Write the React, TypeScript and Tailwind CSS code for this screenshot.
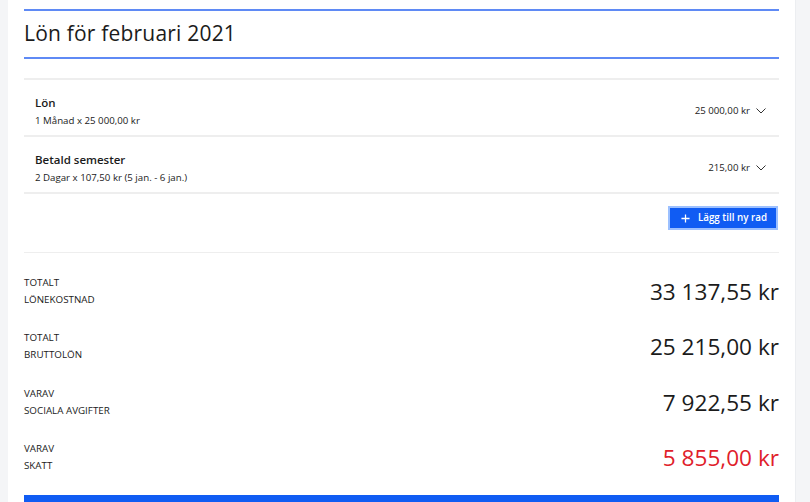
import React from "react";

const rows = [
  { title: "Lön", sub: "1 Månad x 25 000,00 kr", value: "25 000,00 kr" },
  { title: "Betald semester", sub: "2 Dagar x 107,50 kr (5 jan. - 6 jan.)", value: "215,00 kr" },
];

const totals = [
  { a: "TOTALT", b: "LÖNEKOSTNAD", v: "33 137,55 kr", red: false },
  { a: "TOTALT", b: "BRUTTOLÖN", v: "25 215,00 kr", red: false },
  { a: "VARAV", b: "SOCIALA AVGIFTER", v: "7 922,55 kr", red: false },
  { a: "VARAV", b: "SKATT", v: "5 855,00 kr", red: true },
];

function Chevron() {
  return (
    <svg width="10" height="6" viewBox="0 0 10 6" fill="none" className="ml-[6px]">
      <path d="M0.5 0.5L5 5L9.5 0.5" stroke="#333" strokeWidth="1" />
    </svg>
  );
}

export default function App() {
  return (
    <div
      className="flex w-[810px] h-[502px] overflow-hidden bg-white text-[#1b1b1b]"
      style={{ fontFamily: '"Open Sans", "Noto Sans", sans-serif' }}
    >
      <div className="w-[8px] shrink-0 bg-[#f4f5f7]" />
      <div className="flex-1 px-[16px] pt-[9px]">
        <div className="h-[2px] bg-[#5f8af5]" />
        <h1 className="h-[46px] flex items-center text-[21px] tracking-[0.2px] font-normal text-[#1b1b1b]">
          Lön för februari 2021
        </h1>
        <div className="h-[2px] bg-[#5f8af5]" />
        <div className="h-[19px]" />
        <div className="h-[2px] bg-[#eeeeee]" />
        {rows.map((r) => (
          <div key={r.title} className="h-[57px] pt-[8px] flex items-center justify-between px-[11px] border-b-2 border-[#eeeeee]">
            <div className="flex flex-col">
              <div className="text-[11.5px] font-semibold leading-[18px]">{r.title}</div>
              <div className="text-[9.7px] font-medium leading-[18px]">{r.sub}</div>
            </div>
            <div className="flex items-center text-[9.7px] font-medium pr-[2px]">
              {r.value}
              <Chevron />
            </div>
          </div>
        ))}
        <div className="h-[59px] flex items-start justify-end pt-[12px] pr-[1px] border-b border-[#eeeeee]">
          <button className="h-[24px] pl-[11px] pr-[9px] flex items-center gap-[8px] bg-[#105cf3] text-white text-[9.8px] font-semibold border-2 border-[#9cc0ff]">
            <svg width="9" height="9" viewBox="0 0 10 10">
              <path d="M5 0.5V9.5M0.5 5H9.5" stroke="white" strokeWidth="1.4" />
            </svg>
            Lägg till ny rad
          </button>
        </div>
        <div className="pt-[13px]">
          {totals.map((t) => (
            <div key={t.b} className="h-[55.5px] flex items-center justify-between">
              <div className="flex flex-col text-[9.8px] font-medium leading-[17px] pb-[6px]">
                <span>{t.a}</span>
                <span>{t.b}</span>
              </div>
              <div className={`text-[22.6px] pb-[4px] ${t.red ? "text-[#e0202a]" : "text-[#1b1b1b]"}`}>{t.v}</div>
            </div>
          ))}
        </div>
        <div className="h-[10px] bg-[#105cf3] mt-[7px]" />
      </div>
      <div className="w-[15px] shrink-0 bg-[#f4f5f7] border-l border-[#eceef1]" />
    </div>
  );
}
